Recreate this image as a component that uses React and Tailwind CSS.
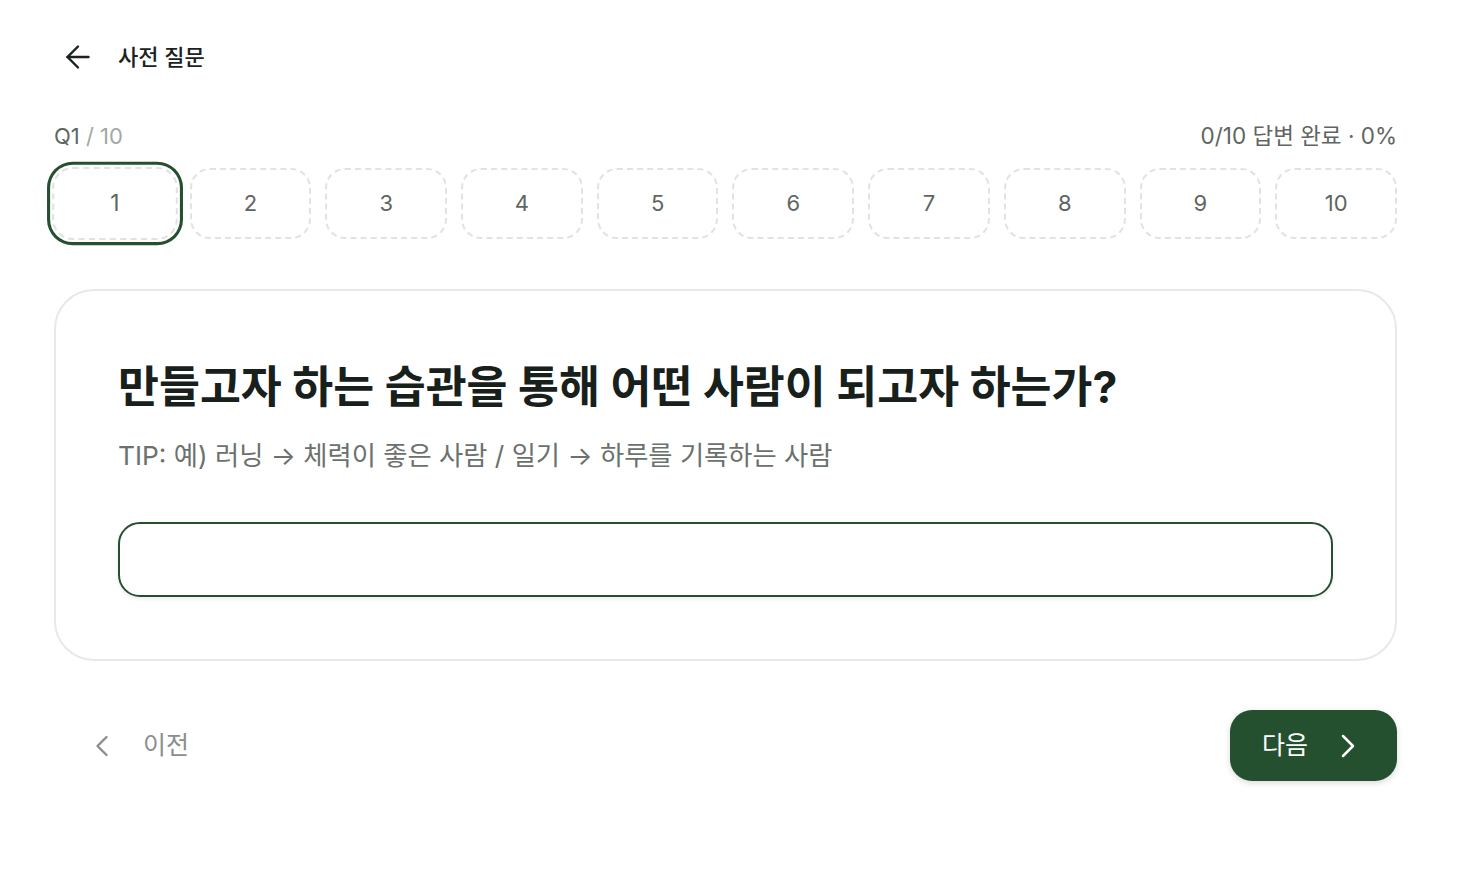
import React, { useState } from 'react'
import { ArrowLeft, ChevronLeft, ChevronRight } from 'lucide-react'

const FONT = { fontFamily: 'Inter, "Noto Sans CJK KR", "Noto Sans", sans-serif' }

function App() {
  const [current, setCurrent] = useState(1)
  const [answer, setAnswer] = useState('')
  const steps = Array.from({ length: 10 }, (_, i) => i + 1)

  return (
    <div className="min-h-[894px] bg-white text-[#1a221d]" style={FONT}>
      <div className="w-[1343px] ml-[54px] pt-[33px]">
        {/* header */}
        <div className="flex items-center h-12">
          <button className="w-[48px] h-[48px] flex items-center justify-center">
            <ArrowLeft className="w-[36px] h-[36px] text-[#1a221d]" strokeWidth={1.6} />
          </button>
          <h1 className="ml-[16px] text-[22px] font-medium">사전 질문</h1>
        </div>

        {/* progress */}
        <div className="mt-[41px] flex items-center justify-between text-[22px] leading-7">
          <div>
            <span className="text-[#5f6661]">Q1</span>
            <span className="text-[#a3a8a5]"> / 10</span>
          </div>
          <div className="text-[22.5px] text-[#5f6661]">0/10 답변 완료 · 0%</div>
        </div>

        <div className="mt-[18px] grid grid-cols-10 gap-[14px]">
          {steps.map((n) => (
            <button
              key={n}
              onClick={() => setCurrent(n)}
              className={`h-[71px] rounded-[20px] border-2 border-dashed border-[#e2e2e2] bg-white flex items-center justify-center text-[22px] text-[#5f6661] ${
                current === n ? 'scale-[1.03] ring-[3px] ring-[#24502f] ring-offset-2' : ''
              }`}
            >
              {n}
            </button>
          ))}
        </div>

        {/* question card */}
        <div className="mt-[50px] border-2 border-[#e8e8e8] rounded-[40px] pl-[62px] pr-[62px] pt-[68px] pb-[62px]">
          <h2 className="text-[44.5px] leading-[56px] font-bold text-[#17201a]">
            만들고자 하는 습관을 통해 어떤 사람이 되고자 하는가?
          </h2>
          <p className="mt-[25px] text-[26.3px] leading-8 text-[#6b716d]">
            TIP: 예) 러닝 → 체력이 좋은 사람 / 일기 → 하루를 기록하는 사람
          </p>
          <input
            value={answer}
            onChange={(e) => setAnswer(e.target.value)}
            className="mt-[50px] w-full h-[75px] rounded-[22px] border-2 border-[#24502f] px-6 text-[22px] outline-none shadow-[0_2px_4px_rgba(0,0,0,0.08)]"
          />
        </div>

        {/* nav */}
        <div className="mt-[49px] flex items-center justify-between">
          <button className="h-[71px] flex items-center pl-[30px] text-[#8a8f8c]">
            <ChevronLeft className="w-[36px] h-[36px]" strokeWidth={1.6} />
            <span className="ml-[23px] text-[25px]">이전</span>
          </button>
          <button className="h-[71px] w-[167px] rounded-[22px] bg-[#24502f] text-white flex items-center pl-[32px] shadow-[0_2px_6px_rgba(0,0,0,0.15)]">
            <span className="text-[25px]">다음</span>
            <ChevronRight className="ml-[20px] w-[40px] h-[40px]" strokeWidth={1.5} />
          </button>
        </div>
      </div>
    </div>
  )
}

export default App
